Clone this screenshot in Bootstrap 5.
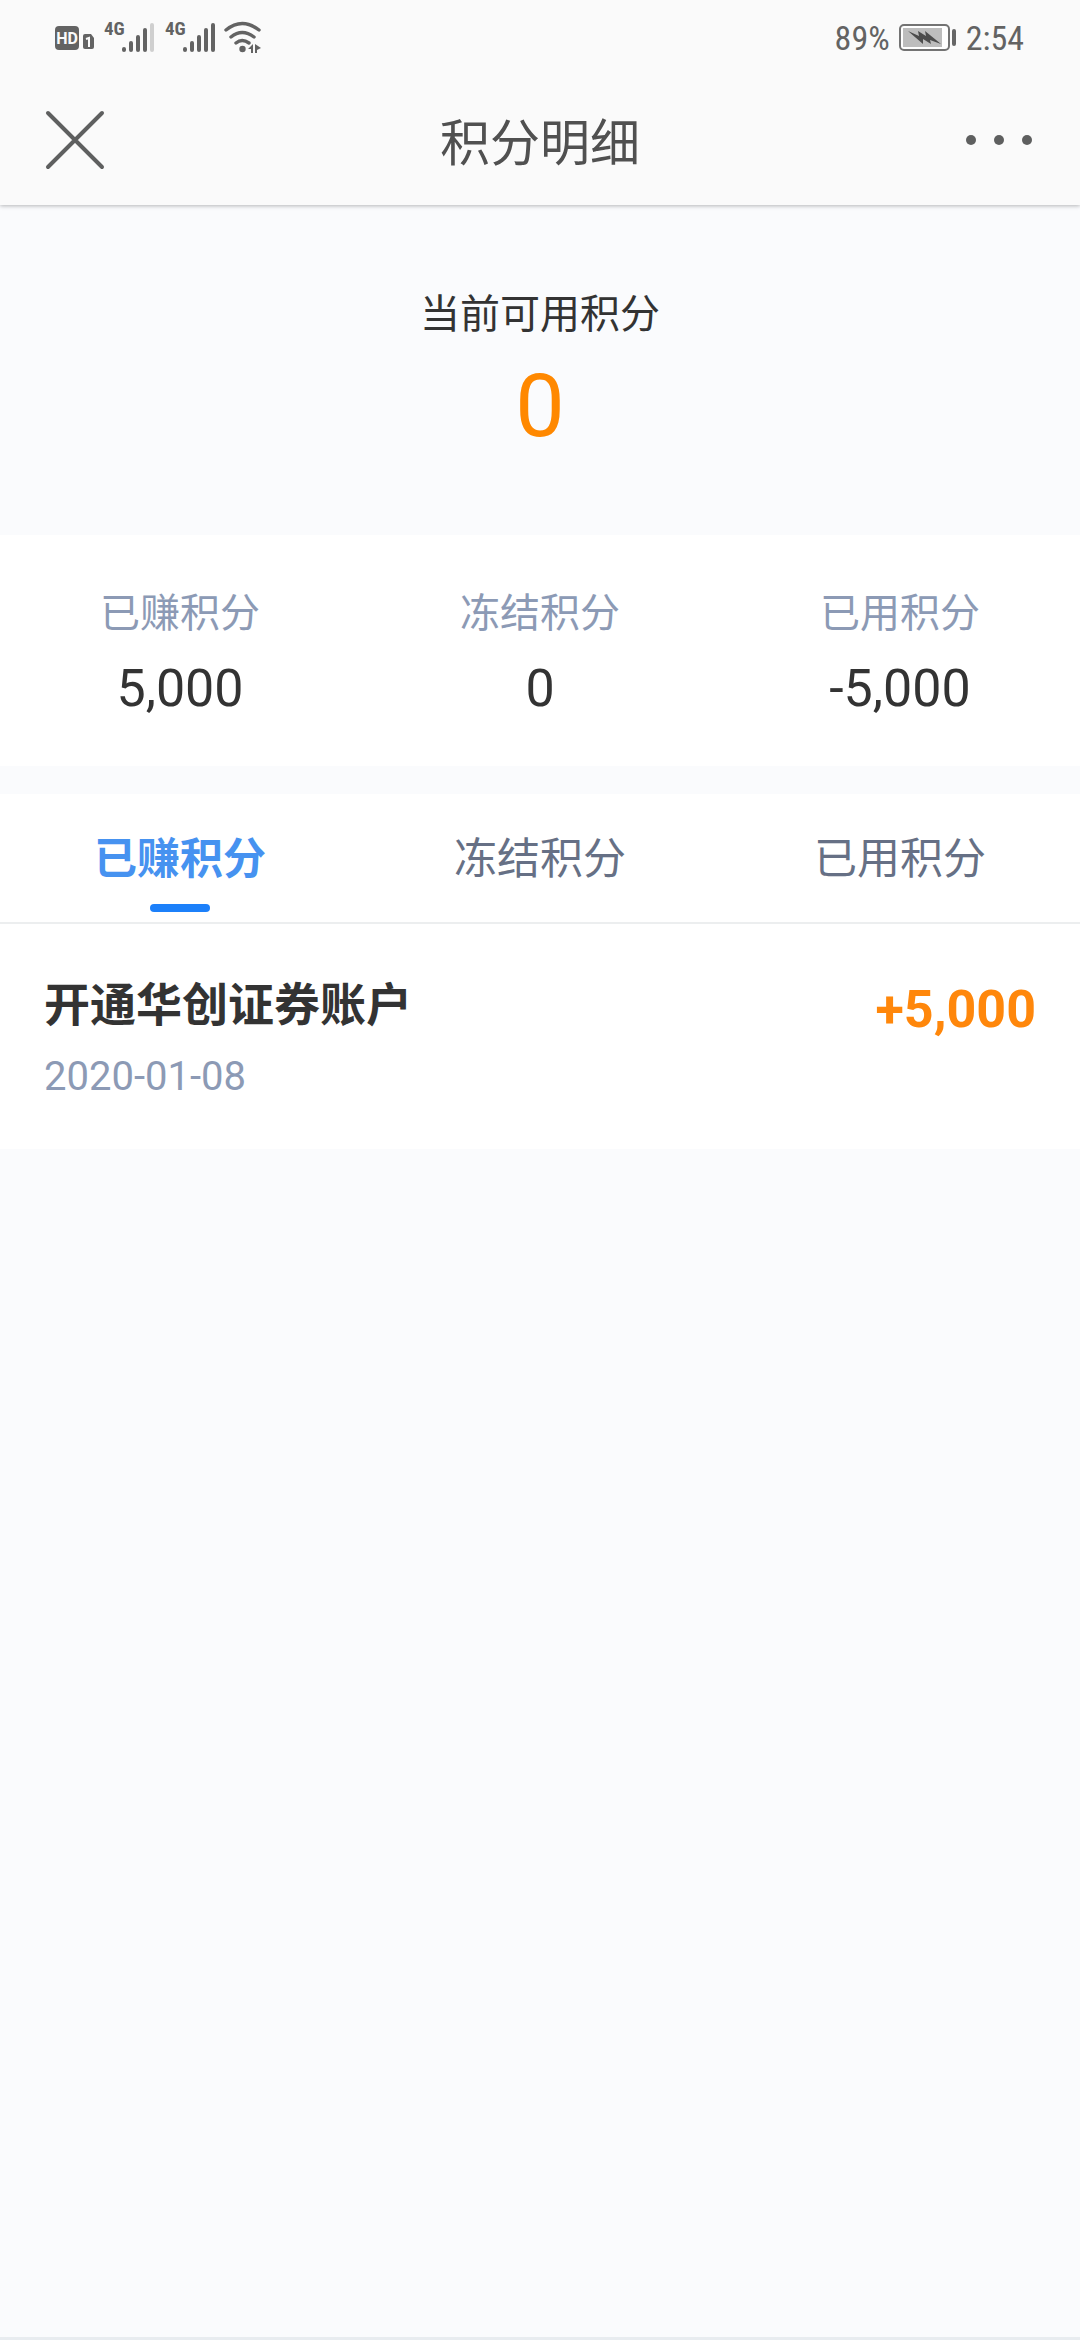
<!DOCTYPE html>
<html lang="zh-CN">
<head>
<meta charset="utf-8">
<meta name="viewport" content="width=device-width, initial-scale=1">
<title>积分明细</title>
<link href="https://cdn.jsdelivr.net/npm/bootstrap@5.3.0/dist/css/bootstrap.min.css" rel="stylesheet">
<style>
  body { background: #fafbfd; color: #333; font-family: Roboto, "Noto Sans CJK SC", sans-serif; }
  svg { display: block; flex: none; }
  .top-area { background: #fafafa; box-shadow: 0 1px 4px rgba(0,0,0,.28); }
  .status-row { height: 76px; padding: 0 56px 0 55px; color: #636363; font-family: "Roboto Condensed", "Liberation Sans Narrow", Roboto, sans-serif; font-size: 34px; line-height: 40px; }
  .title-row { height: 129px; padding: 0 44px; }
  .title-row h1 { font-size: 50px; line-height: 60px; padding-top: 6px; color: #505050; }
  .title-row .btn { color: #5e5f5f; }
  .text-label { font-size: 40px; line-height: 60px; }
  .text-soft { color: #8c9ab5; }
  .balance { padding: 80px 0 68px; }
  .balance-num { font-size: 88px; line-height: 122px; color: #ff8800; }
  .stats { padding: 49px 0 32px; }
  .text-figure { font-size: 52px; line-height: 90px; }
  .tabs { margin-top: 28px; border-bottom: 2px solid #eceeef; }
  .tabs .nav-link { color: #667085; font-size: 43px; line-height: 60px; padding: 35px 0 10px; }
  .tabs .nav-link::after { content: ""; display: block; width: 60px; height: 8px; margin: 15px auto 0; border-radius: 4px; }
  .tabs .nav-link.active { color: #4692f0; font-weight: 700; }
  .tabs .nav-link.active::after { background: #1c80fa; }
  .entry { padding: 48px 44px 42px; color: #333; }
  .entry h2 { font-size: 46px; line-height: 66px; font-weight: 700; margin-bottom: 9px; }
  .amount { color: #ff870b; font-size: 52px; line-height: 76px; }
  .bottom-line { height: 3px; background: #e8ecf0; }
</style>
<script src="https://cdn.jsdelivr.net/npm/bootstrap@5.3.0/dist/js/bootstrap.bundle.min.js"></script>
</head>
<body class="d-flex flex-column min-vh-100">
<header class="top-area position-relative">
  <div class="status-row d-flex align-items-center justify-content-between">
    <svg width="208" height="52" viewBox="0 -8 208 52" fill="#636363" role="img" aria-label="HD 4G 4G Wi-Fi">
      <rect x="0" y="6" width="24" height="24" rx="4"/>
      <text x="12" y="24" text-anchor="middle" font-family="Roboto" font-weight="700" font-size="16" fill="#fafafa">HD</text>
      <path d="M31 14h5l3 4v9a2 2 0 0 1-2 2h-7a2 2 0 0 1-2-2V16a2 2 0 0 1 2-2z"/>
      <path d="M31 19l3-1v9" fill="none" stroke="#fafafa" stroke-width="2"/>
      <g font-family="Roboto Condensed, Liberation Sans Narrow, Roboto" font-weight="700" font-size="19">
        <text x="49" y="15">4G</text><text x="110" y="15">4G</text>
      </g>
      <g fill="none" stroke="#636363" stroke-width="4" stroke-linecap="round">
        <path d="M69 29v1M76 23v7M83 17v13M90 10v20"/>
        <path d="M97 5v25" stroke="#cfcfcf"/>
        <path d="M130 29v1M137 23v7M144 17v13M151 10v20M158 5v25"/>
        <path d="M171 10q16-13 33 0M176 17q11-9 23 0M181 23q6-5 13 0" stroke-width="3.4"/>
      </g>
      <circle cx="187.500" cy="29" r="3.200"/>
      <path d="M193 29l5-5v9h-2v-4zM200 24v9h2v-3l4-2z"/>
    </svg>
    <div class="d-flex align-items-center">
      <span>89%</span>
      <svg class="ms-2 me-2" width="60" height="30" viewBox="0 0 60 30" role="img" aria-label="充电中">
        <rect x="2" y="2" width="49" height="25" rx="4" fill="#fff" stroke="#737373" stroke-width="2"/>
        <rect x="5" y="5" width="39" height="19" fill="#bdbdbd"/>
        <path d="M10 8l11 5-1-5 8 5-1-5 16 13-11-4 1 4-8-5v5z" fill="#4c4c4c"/>
        <rect x="54" y="6" width="4" height="17" rx="2" fill="#666"/>
      </svg>
      <time>2:54</time>
    </div>
  </div>
  <div class="title-row d-flex align-items-center justify-content-between">
    <button class="btn border-0 p-0" type="button" aria-label="关闭">
      <svg width="70" height="62" viewBox="0 0 70 62" stroke="currentColor" stroke-width="4" stroke-linecap="round"><path d="M4 3l54 54M58 3L4 57"/></svg>
    </button>
    <h1 class="m-0 fw-normal">积分明细</h1>
    <button class="btn border-0 p-0" type="button" aria-label="更多">
      <svg width="70" height="62" viewBox="0 0 70 62" fill="currentColor"><circle cx="5" cy="30" r="5"/><circle cx="33" cy="30" r="5"/><circle cx="61" cy="30" r="5"/></svg>
    </button>
  </div>
</header>
<main class="flex-grow-1">
  <section class="balance text-center">
    <div class="text-label">当前可用积分</div>
    <div class="balance-num">0</div>
  </section>
  <section class="stats bg-white">
    <div class="row g-0 text-center">
      <div class="col"><div class="text-label text-soft">已赚积分</div><div class="text-figure">5,000</div></div>
      <div class="col"><div class="text-label text-soft">冻结积分</div><div class="text-figure">0</div></div>
      <div class="col"><div class="text-label text-soft">已用积分</div><div class="text-figure">-5,000</div></div>
    </div>
  </section>
  <div class="tabs nav nav-justified bg-white" role="tablist">
    <button class="nav-link nav-item border-0 bg-transparent active" type="button" role="tab" aria-selected="true">已赚积分</button>
    <button class="nav-link nav-item border-0 bg-transparent" type="button" role="tab" aria-selected="false">冻结积分</button>
    <button class="nav-link nav-item border-0 bg-transparent" type="button" role="tab" aria-selected="false">已用积分</button>
  </div>
  <ul class="list-group list-group-flush">
    <li class="entry list-group-item bg-white border-0 d-flex justify-content-between align-items-start">
      <div>
        <h2>开通华创证券账户</h2>
        <div class="text-label text-soft">2020-01-08</div>
      </div>
      <div class="amount fw-bold">+5,000</div>
    </li>
  </ul>
</main>
<div class="bottom-line"></div>
</body>
</html>
